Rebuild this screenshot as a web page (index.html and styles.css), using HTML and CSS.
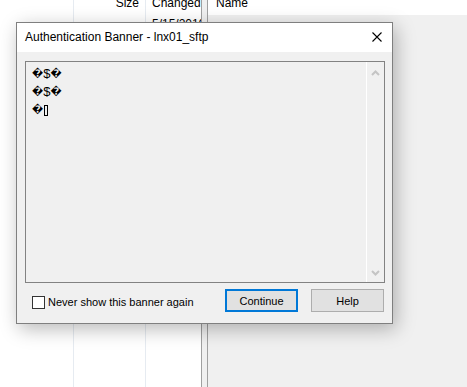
FILE: index.html
```html
<!DOCTYPE html>
<html>
<head>
<meta charset="utf-8">
<link rel="stylesheet" href="styles.css">
</head>
<body>
<div class="app">
  <div class="left">
    <div class="col c1">
      <div class="hcell"></div>
    </div>
    <div class="col c2">
      <div class="hcell right-al">Size</div>
      <div class="cell right-al"></div>
    </div>
    <div class="col c3">
      <div class="hcell">Changed</div>
      <div class="cell">5/15/2019</div>
    </div>
  </div>
  <div class="splitter"></div>
  <div class="rightpane">
    <div class="rhead">Name</div>
    <div class="rbody"></div>
  </div>
</div>

<div class="dialog">
  <div class="titlebar">
    <span class="title">Authentication Banner - lnx01_sftp</span>
    <svg class="close" width="10" height="10" viewBox="0 0 10 10">
      <path d="M0.5 0.5 L9.5 9.5 M9.5 0.5 L0.5 9.5" stroke="#000" stroke-width="1.1" fill="none"/>
    </svg>
  </div>
  <div class="dbody">
    <div class="textbox">
      <div class="tbtext">
        <div class="line"><span class="rep">�</span>$<span class="rep">�</span></div>
        <div class="line"><span class="rep">�</span>$<span class="rep">�</span></div>
        <div class="line"><span class="rep">�</span><span class="tofu"></span></div>
      </div>
      <div class="vscroll">
        <svg width="9" height="6" viewBox="0 0 9 6"><path d="M1 5 L4.5 1.5 L8 5" stroke="#c4c4c4" stroke-width="2" fill="none"/></svg>
        <svg width="9" height="6" viewBox="0 0 9 6"><path d="M1 1 L4.5 4.5 L8 1" stroke="#c4c4c4" stroke-width="2" fill="none"/></svg>
      </div>
    </div>
    <div class="footer">
      <label class="chk"><span class="box"></span><span class="chklabel">Never show this banner again</span></label>
      <div class="buttons">
        <div class="btn default">Continue</div>
        <div class="btn">Help</div>
      </div>
    </div>
  </div>
</div>
</body>
</html>
```

FILE: styles.css
```css
* { box-sizing: border-box; }
html, body {
  margin: 0;
  padding: 0;
  width: 467px;
  height: 387px;
  overflow: hidden;
  background: #fff;
  font-family: "Liberation Sans", Arial, sans-serif;
  font-size: 12px;
  color: #000;
}
.app {
  display: flex;
  height: 387px;
}
.left {
  display: flex;
  width: 201px;
  background: #fff;
}
.col {
  border-right: 1px solid #e6ebf1;
}
.c1 { width: 74px; }
.c2 { width: 72px; }
.c3 { width: 55px; border-right: none; }
.hcell {
  height: 19px;
  margin-top: -4px;
  line-height: 15px;
  padding: 0 6px;
  white-space: nowrap;
  overflow: hidden;
}
.cell {
  height: 18px;
  line-height: 15px;
  padding: 2px 6px 0;
  white-space: nowrap;
  overflow: hidden;
}
.right-al { text-align: right; }
.splitter {
  width: 7px;
  background: #f0f0f0;
  border-left: 1px solid #a0a0a0;
  border-right: 1px solid #a0a0a0;
}
.rightpane {
  flex: 1;
  display: flex;
  flex-direction: column;
}
.rhead {
  margin-top: -4px;
  height: 19px;
  line-height: 15px;
  padding-left: 8px;
  background: #fff;
}
.rbody {
  flex: 1;
  background: #f0f0f0;
}

.dialog {
  position: absolute;
  left: 16px;
  top: 22px;
  width: 377px;
  height: 302px;
  border: 1px solid #7f7f7f;
  background: #f0f0f0;
  box-shadow: 3px 5px 18px rgba(0,0,0,0.28);
  display: flex;
  flex-direction: column;
}
.titlebar {
  height: 29px;
  background: #fff;
  display: flex;
  align-items: center;
  justify-content: space-between;
  padding: 0 10px 0 8px;
}
.title {
  font-size: 12px;
  padding-bottom: 1px;
}
.close { display: block; margin-bottom: 1px; }
.dbody {
  flex: 1;
  padding: 9px 7px 0 8px;
  display: flex;
  flex-direction: column;
}
.textbox {
  height: 222px;
  width: 360px;
  border: 1px solid #828282;
  background: #f0f0f0;
  display: flex;
}
.tbtext {
  flex: 1;
  padding: 3px 0 0 6px;
  font-family: "Liberation Sans", sans-serif;
  font-size: 13px;
}
.rep {
  font-family: "DejaVu Sans", sans-serif;
  font-size: 10px;
  font-weight: bold;
}
.line {
  height: 18px;
  line-height: 18px;
  display: flex;
  align-items: center;
}
.tofu {
  display: inline-block;
  width: 4px;
  height: 11px;
  border: 1px solid #000;
  margin-left: 1px;
}
.vscroll {
  width: 18px;
  border-left: 1px solid #fff;
  display: flex;
  flex-direction: column;
  justify-content: space-between;
  align-items: center;
  padding: 8px 0 6px;
}
.vscroll svg { display: block; }
.footer {
  display: flex;
  align-items: center;
  justify-content: space-between;
  padding: 6px 1px 0 7px;
  font-size: 11px;
}
.chk {
  display: flex;
  align-items: center;
  margin-top: 3px;
}
.box {
  width: 13px;
  height: 13px;
  border: 1px solid #333;
  background: #fff;
  margin-right: 3px;
}
.chklabel { line-height: 14px; }
.buttons {
  display: flex;
  gap: 13px;
}
.btn {
  width: 73px;
  height: 23px;
  border: 1px solid #adadad;
  background: #e1e1e1;
  display: flex;
  align-items: center;
  justify-content: center;
}
.btn.default {
  border: 2px solid #0078d7;
}
```
